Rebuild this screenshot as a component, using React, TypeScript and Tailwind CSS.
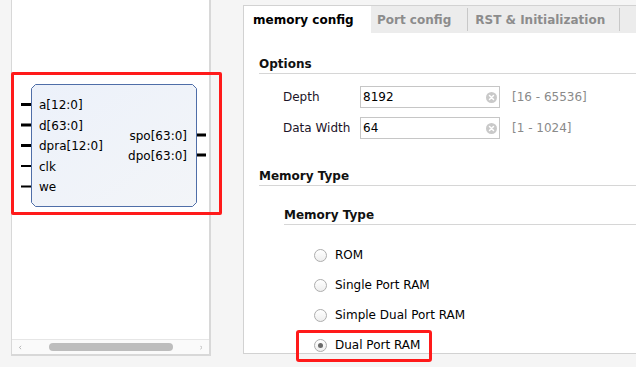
import type { ReactNode } from 'react';

const LEFT_PINS: { label: string; bus: boolean }[] = [
  { label: 'a[12:0]', bus: true },
  { label: 'd[63:0]', bus: true },
  { label: 'dpra[12:0]', bus: true },
  { label: 'clk', bus: false },
  { label: 'we', bus: false },
];

const RIGHT_PINS = ['spo[63:0]', 'dpo[63:0]'];

const MEM_TYPES = ['ROM', 'Single Port RAM', 'Simple Dual Port RAM', 'Dual Port RAM'];

function Block() {
  return (
    <div className="relative ml-[9px] w-[185px] h-[123px] flex justify-between">
      <svg className="absolute inset-0" width="185" height="123" viewBox="0 0 185 123">
        <defs>
          <linearGradient id="blk" x1="0" y1="0" x2="1" y2="1">
            <stop offset="0" stopColor="#ecf1fa" />
            <stop offset="1" stopColor="#f3f5f8" />
          </linearGradient>
        </defs>
        <path
          d="M14.5 0.5 H171.5 L175.5 4.5 V118.5 L171.5 122.5 H14.5 L10.5 118.5 V4.5 Z"
          fill="url(#blk)"
          stroke="#4f6ea8"
          strokeWidth="1"
        />
        {LEFT_PINS.map((p, i) => (
          <rect key={p.label} x="0" y={20.5 + i * 20.5 - (p.bus ? 1.5 : 1)} width="10" height={p.bus ? 3 : 2} fill="#000" />
        ))}
        {RIGHT_PINS.map((p, i) => (
          <rect key={p} x="176" y={51 + i * 20 - 1.5} width="9" height="3" fill="#000" />
        ))}
      </svg>
      <div className="relative flex flex-col pt-[11px] pl-[18px]">
        {LEFT_PINS.map((p) => (
          <div key={p.label} className="h-[20.5px] flex items-center">
            {p.label}
          </div>
        ))}
      </div>
      <div className="relative flex flex-col items-end pt-[42px] pr-[19px]">
        {RIGHT_PINS.map((p) => (
          <div key={p} className="h-5 flex items-center">
            {p}
          </div>
        ))}
      </div>
    </div>
  );
}

function Heading({ children }: { children: ReactNode }) {
  return <div className="font-bold leading-[14px] pb-[2px] border-b border-[#d6d6d6] text-[#111]">{children}</div>;
}

function Field({ label, value, range }: { label: string; value: string; range: string }) {
  return (
    <div className="flex items-center h-[22px]">
      <div className="w-[77px] text-[#1c1428]">{label}</div>
      <div className="w-[140px] h-[22px] border border-[#c6c6c6] bg-white flex items-center pl-[2px] pr-[2px]">
        <span className="flex-1 text-black">{value}</span>
        <svg width="11" height="11" viewBox="0 0 11 11">
          <circle cx="5.5" cy="5.5" r="5.5" fill="#c9c9c9" />
          <path d="M3.5 3.5 L7.5 7.5 M7.5 3.5 L3.5 7.5" stroke="#fff" strokeWidth="1.5" strokeLinecap="round" />
        </svg>
      </div>
      <div className="ml-[12px] text-[#8a8a8a]">{range}</div>
    </div>
  );
}

function Radio({ label, checked }: { label: string; checked: boolean }) {
  return (
    <div className="h-[30px] flex items-center">
      <div className="w-[13px] h-[13px] rounded-full border border-[#adadad] bg-gradient-to-b from-white to-[#eeeeee] flex items-center justify-center">
        {checked && <div className="w-[5px] h-[5px] rounded-full bg-[#6a6a6a]" />}
      </div>
      <div className="ml-[8px] text-black">{label}</div>
    </div>
  );
}

export default function App() {
  return (
    <div
      className="relative w-[636px] h-[367px] bg-[#f5f5f5] flex overflow-hidden text-[12px] text-black"
      style={{ fontFamily: '"DejaVu Sans", Verdana, sans-serif' }}
    >
      {/* diagram panel */}
      <div className="ml-[11px] w-[200px] h-[356px] border-l border-r-2 border-b-2 border-[#d8d8d8] bg-white flex flex-col">
        <div className="flex-1 pt-[84px]">
          <Block />
        </div>
        <div className="h-[15px] border-t border-[#e6e6e6] bg-[#fafafa] flex items-center px-[7px]">
          <svg width="6" height="9" viewBox="0 0 6 9">
            <path d="M5 0.5 L1 4.5 L5 8.5" fill="none" stroke="#7a7a7a" strokeWidth="1.3" />
          </svg>
          <div className="flex-1 px-[27px] flex">
            <div className="w-[124px] h-[8px] rounded-full bg-[#bdbdbd]" />
          </div>
          <svg width="6" height="9" viewBox="0 0 6 9">
            <path d="M1 0.5 L5 4.5 L1 8.5" fill="none" stroke="#7a7a7a" strokeWidth="1.3" />
          </svg>
        </div>
      </div>

      {/* config panel */}
      <div className="ml-[32px] mt-[5px] w-[393px] h-[349px] border-l border-t border-b border-[#d2d2d2] bg-white flex flex-col shrink-0">
        <div className="h-[29px] bg-[#ececec] flex items-end font-bold">
          <div className="w-[127px] h-[27px] bg-white pl-[9px] flex items-center">memory config</div>
          <div className="h-[27px] flex items-center">
            <span className="pl-[6px] pr-[16px] text-[#8c8c8c]">Port config</span>
            <div className="w-px h-[23px] bg-[#c8c8c8]" />
            <span className="pl-[7px] pr-[14px] text-[#8c8c8c]">RST &amp; Initialization</span>
            <div className="w-px h-[23px] bg-[#c8c8c8]" />
          </div>
        </div>
        <div className="flex flex-col pl-[15px] pt-[24px]">
          <Heading>Options</Heading>
          <div className="pl-[24px] mt-[12px] flex flex-col gap-[9px]">
            <Field label="Depth" value="8192" range="[16 - 65536]" />
            <Field label="Data Width" value="64" range="[1 - 1024]" />
          </div>
          <div className="mt-[30px]">
            <Heading>Memory Type</Heading>
          </div>
          <div className="ml-[25px] mt-[22px]">
            <Heading>Memory Type</Heading>
            <div className="ml-[30px] mt-[15px] flex flex-col">
              {MEM_TYPES.map((t) => (
                <Radio key={t} label={t} checked={t === 'Dual Port RAM'} />
              ))}
            </div>
          </div>
        </div>
      </div>

      {/* annotations */}
      <div className="absolute left-[11px] top-[72px] w-[211px] h-[143px] border-[3px] border-[#ff1a1a] rounded-[2px]" />
      <div className="absolute left-[296px] top-[330px] w-[136px] h-[32px] border-[3px] border-[#ff1a1a] rounded-[3px]" />
    </div>
  );
}
